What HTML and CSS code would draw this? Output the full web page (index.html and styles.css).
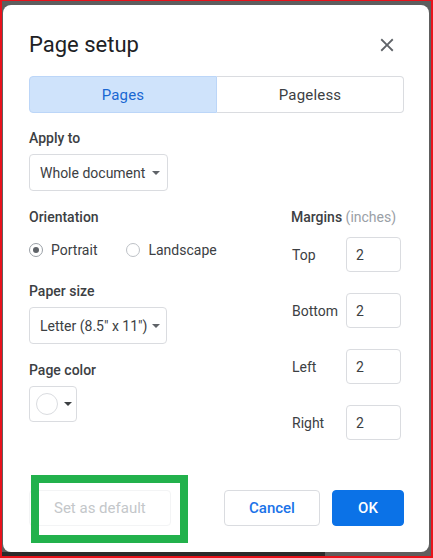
FILE: index.html
```html
<!DOCTYPE html>
<html>
<head>
<meta charset="utf-8">
<link rel="stylesheet" href="styles.css">
</head>
<body>
<div class="screen">
  <div class="dialog">
    <div class="header">
      <div class="title">Page setup</div>
      <svg class="close" viewBox="0 0 24 24" width="22" height="22"><path d="M19 6.41L17.59 5 12 10.59 6.41 5 5 6.41 10.59 12 5 17.59 6.41 19 12 13.41 17.59 19 19 17.59 13.41 12z" fill="#5f6368"/></svg>
    </div>
    <div class="tabs">
      <div class="tab tab-active">Pages</div>
      <div class="tab">Pageless</div>
    </div>
    <div class="label label-apply">Apply to</div>
    <div class="select select-apply">
      <span>Whole document</span>
      <svg class="arrow" width="8" height="4" viewBox="0 0 8 4"><polygon points="0,0 8,0 4,4" fill="#5f6368"/></svg>
    </div>
    <div class="columns">
      <div class="left">
        <div class="label">Orientation</div>
        <div class="radios">
          <div class="radio-item"><span class="radio radio-on"></span><span>Portrait</span></div>
          <div class="radio-item"><span class="radio"></span><span>Landscape</span></div>
        </div>
        <div class="label label-paper">Paper size</div>
        <div class="select select-paper">
          <span>Letter (8.5" x 11")</span>
          <svg class="arrow" width="8" height="4" viewBox="0 0 8 4"><polygon points="0,0 8,0 4,4" fill="#5f6368"/></svg>
        </div>
        <div class="label label-color">Page color</div>
        <div class="color-btn">
          <span class="swatch"></span>
          <svg class="arrow" width="8" height="4" viewBox="0 0 8 4"><polygon points="0,0 8,0 4,4" fill="#3c4043"/></svg>
        </div>
      </div>
      <div class="right">
        <div class="label">Margins <span class="muted">(inches)</span></div>
        <div class="margin-rows">
          <div class="margin-row"><span class="mlabel">Top</span><div class="input">2</div></div>
          <div class="margin-row"><span class="mlabel">Bottom</span><div class="input">2</div></div>
          <div class="margin-row"><span class="mlabel">Left</span><div class="input">2</div></div>
          <div class="margin-row"><span class="mlabel">Right</span><div class="input">2</div></div>
        </div>
      </div>
    </div>
    <div class="footer">
      <div class="btn btn-disabled">Set as default</div>
      <div class="footer-right">
        <div class="btn btn-outline">Cancel</div>
        <div class="btn btn-primary">OK</div>
      </div>
    </div>
    <div class="highlight"></div>
  </div>
</div>
</body>
</html>
```

FILE: styles.css
```css
* { box-sizing: border-box; }
html, body { margin: 0; padding: 0; }
body {
  font-family: Roboto, "Liberation Sans", Arial, sans-serif;
  background: #5e5e5e;
}
.screen {
  width: 433px;
  height: 558px;
  border-style: solid;
  border-color: #e8121b;
  border-width: 1px 2px 2px 2px;
  padding: 4px 2px 3px 1px;
  background: linear-gradient(#2b2b2b, #2b2b2b) no-repeat left bottom / 323px 4px, #5e5e5e;
}
.dialog {
  position: relative;
  width: 426px;
  height: 547px;
  background: #fff;
  border-radius: 8px;
  padding: 26px 25px 0 26px;
  display: flex;
  flex-direction: column;
}
.header {
  display: flex;
  align-items: center;
  justify-content: space-between;
  height: 28px;
}
.title {
  font-size: 22px;
  line-height: 28px;
  color: #202124;
}
.close {
  margin-right: 6px;
  margin-top: -1px;
}
.tabs {
  display: flex;
  margin-top: 17px;
  height: 37px;
}
.tab {
  flex: 1;
  display: flex;
  align-items: center;
  justify-content: center;
  border: 1px solid #dadce0;
  border-left: none;
  border-radius: 0 4px 4px 0;
  font-size: 15px;
  font-weight: 400;
  letter-spacing: 0.2px;
  color: #3c4043;
}
.tab-active {
  background: #cfe3fb;
  border: 1px solid #bcd6f8;
  color: #1967d2;
  border-radius: 4px 0 0 4px;
}
.label {
  font-size: 14px;
  line-height: 20px;
  font-weight: 500;
  color: #3c4043;
}
.label-apply { margin-top: 15px; }
.label-paper { margin-top: 21px; }
.label-color { margin-top: 16px; }
.muted { color: #9aa0a6; font-weight: 400; }
.select {
  margin-top: 6px;
  align-self: flex-start;
  display: flex;
  align-items: center;
  height: 37px;
  border: 1px solid #dadce0;
  border-radius: 4px;
  padding: 0 7px 0 10px;
  font-size: 14px;
  color: #3c4043;
  gap: 7px;
  white-space: nowrap;
}
.select-paper { gap: 5px; padding-right: 6px; }
.arrow { flex: none; }
.columns {
  margin-top: 16px;
  display: flex;
  justify-content: space-between;
}
.left { display: flex; flex-direction: column; align-items: flex-start; }
.radios {
  display: flex;
  margin-top: 13px;
  height: 20px;
  gap: 29px;
  font-size: 14px;
  color: #3c4043;
}
.radio-item { display: flex; align-items: center; gap: 8px; }
.radio {
  width: 14px;
  height: 14px;
  border-radius: 50%;
  border: 1px solid #bdc1c6;
  display: flex;
  align-items: center;
  justify-content: center;
}
.radio-on { border-color: #9aa0a6; }
.radio-on::after {
  content: "";
  width: 6px;
  height: 6px;
  border-radius: 50%;
  background: #5f6368;
}
.color-btn {
  margin-top: 6px;
  width: 48px;
  height: 36px;
  border: 1px solid #dadce0;
  border-radius: 4px;
  display: flex;
  align-items: center;
  padding-left: 6px;
  gap: 6px;
}
.swatch {
  width: 22px;
  height: 22px;
  border-radius: 50%;
  border: 1px solid #dadce0;
}
.right { margin-right: 2px; width: 111px; }
.margin-rows {
  margin-top: 10px;
  display: flex;
  flex-direction: column;
  gap: 21px;
}
.margin-row {
  display: flex;
  align-items: center;
  font-size: 14px;
  color: #3c4043;
}
.mlabel { width: 55px; padding-left: 1px; }
.input {
  width: 55px;
  height: 35px;
  border: 1px solid #dadce0;
  border-radius: 4px;
  display: flex;
  align-items: center;
  padding-left: 9px;
  font-size: 14px;
  color: #3c4043;
}
.footer {
  margin-top: auto;
  margin-bottom: 26px;
  display: flex;
  justify-content: space-between;
  align-items: center;
}
.footer-right { display: flex; gap: 12px; }
.btn {
  height: 36px;
  display: flex;
  align-items: center;
  justify-content: center;
  padding: 0 24px;
  border-radius: 4px;
  font-size: 15px;
  font-weight: 500;
  border: 1px solid transparent;
  white-space: nowrap;
}
.btn-disabled {
  border-color: #f3f4f5;
  color: #c4c7ca;
  font-weight: 400;
}
.btn-outline {
  border-color: #dadce0;
  color: #1a73e8;
  width: 96px;
}
.btn-primary {
  background: #0b72e7;
  border-color: #0b72e7;
  color: #fff;
  width: 72px;
}
.highlight {
  position: absolute;
  left: 28px;
  top: 470px;
  width: 157px;
  height: 68px;
  border: 8px solid #22b14c;
}
```
